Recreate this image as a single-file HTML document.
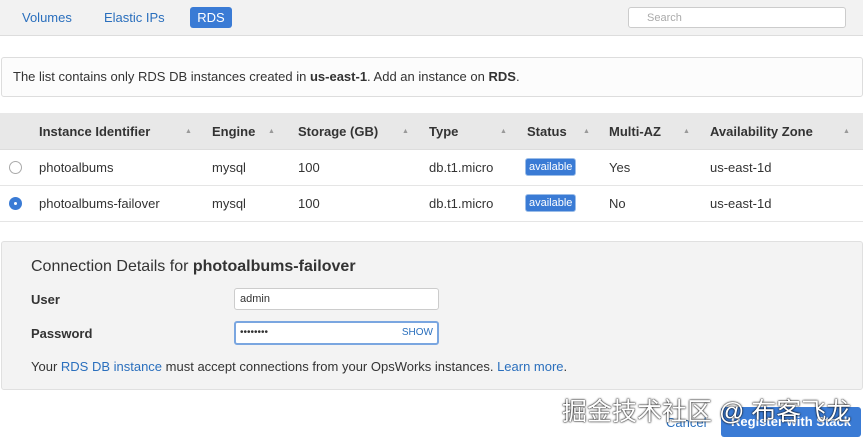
<!DOCTYPE html>
<html><head><style>
body{margin:0;width:863px;height:437px;background:#fff;font-family:"Liberation Sans","Noto Sans CJK SC",sans-serif;color:#333;position:relative;overflow:hidden;font-size:13px}
.a{position:absolute;white-space:nowrap}
.blue{color:#2a6fbd}
.hd{font-weight:bold;font-size:13px;color:#333}
.arr{font-size:7px;color:#999}
.badge{background:#3a7bd5;color:#fff;border-radius:3px;padding:2px 3px;font-size:11px;border:1px solid #9bbde8}
</style></head><body>
<div class="a" style="left:0;top:0;width:863px;height:35px;background:#f2f2f2;border-bottom:1px solid #ddd"></div>
<div class="a blue" style="left:22px;top:10px">Volumes</div>
<div class="a blue" style="left:104px;top:10px">Elastic IPs</div>
<div class="a" style="left:190px;top:7px;width:42px;height:21px;background:#3a7bd5;border-radius:3px;color:#fff;text-align:center;line-height:21px">RDS</div>
<div class="a" style="left:628px;top:7px;width:218px;height:21px;background:#fff;border:1px solid #ccc;border-radius:3px;color:#aaa;font-size:11px;line-height:21px;padding-left:18px;box-sizing:border-box">Search</div>

<div class="a" style="left:1px;top:57px;width:860px;height:38px;border:1px solid #ddd;border-radius:3px;background:#fcfcfc"></div>
<div class="a" style="left:13px;top:69px">The list contains only RDS DB instances created in <b>us-east-1</b>. Add an instance on <b>RDS</b>.</div>

<div class="a" style="left:0;top:113px;width:863px;height:36px;background:#e8e8e8;border-bottom:1px solid #ddd"></div>
<div class="a hd" style="left:39px;top:124px">Instance Identifier</div><div class="a arr" style="left:185px;top:128px">▲</div>
<div class="a hd" style="left:212px;top:124px">Engine</div><div class="a arr" style="left:268px;top:128px">▲</div>
<div class="a hd" style="left:298px;top:124px">Storage (GB)</div><div class="a arr" style="left:402px;top:128px">▲</div>
<div class="a hd" style="left:429px;top:124px">Type</div><div class="a arr" style="left:500px;top:128px">▲</div>
<div class="a hd" style="left:527px;top:124px">Status</div><div class="a arr" style="left:583px;top:128px">▲</div>
<div class="a hd" style="left:609px;top:124px">Multi-AZ</div><div class="a arr" style="left:683px;top:128px">▲</div>
<div class="a hd" style="left:710px;top:124px">Availability Zone</div><div class="a arr" style="left:843px;top:128px">▲</div>

<div class="a" style="left:0;top:185px;width:863px;border-top:1px solid #e5e5e5"></div>
<div class="a" style="left:0;top:221px;width:863px;border-top:1px solid #e5e5e5"></div>
<div class="a" style="left:9px;top:161px;width:11px;height:11px;border:1px solid #aaa;border-radius:50%"></div>
<div class="a" style="left:9px;top:197px;width:13px;height:13px;background:#3a7bd5;border-radius:50%"></div>
<div class="a" style="left:14px;top:202px;width:3px;height:3px;background:#fff;border-radius:50%"></div>
<div class="a" style="left:39px;top:160px">photoalbums</div>
<div class="a" style="left:212px;top:160px">mysql</div>
<div class="a" style="left:298px;top:160px">100</div>
<div class="a" style="left:429px;top:160px">db.t1.micro</div>
<div class="a badge" style="left:525px;top:158px">available</div>
<div class="a" style="left:609px;top:160px">Yes</div>
<div class="a" style="left:710px;top:160px">us-east-1d</div>
<div class="a" style="left:39px;top:196px">photoalbums-failover</div>
<div class="a" style="left:212px;top:196px">mysql</div>
<div class="a" style="left:298px;top:196px">100</div>
<div class="a" style="left:429px;top:196px">db.t1.micro</div>
<div class="a badge" style="left:525px;top:194px">available</div>
<div class="a" style="left:609px;top:196px">No</div>
<div class="a" style="left:710px;top:196px">us-east-1d</div>

<div class="a" style="left:1px;top:241px;width:860px;height:147px;background:#f3f3f3;border:1px solid #e0e0e0;border-radius:3px"></div>
<div class="a" style="left:31px;top:258px;font-size:16px">Connection Details for <b>photoalbums-failover</b></div>
<div class="a" style="left:31px;top:292px;font-weight:bold">User</div>
<div class="a" style="left:234px;top:288px;width:205px;height:22px;background:#fff;border:1px solid #ccc;border-radius:3px;box-sizing:border-box;font-size:11px;padding:4px 5px">admin</div>
<div class="a" style="left:31px;top:326px;font-weight:bold">Password</div>
<div class="a" style="left:234px;top:321px;width:205px;height:24px;background:#fff;border:2px solid #7aa6e0;border-radius:3px;box-sizing:border-box;font-size:10px;padding:4px 4px">••••••••<span style="float:right;color:#2a6fbd">SHOW</span></div>
<div class="a" style="left:31px;top:359px">Your <span class="blue">RDS DB instance</span> must accept connections from your OpsWorks instances. <span class="blue">Learn more</span>.</div>

<div class="a blue" style="left:666px;top:415px">Cancel</div>
<div class="a" style="left:721px;top:407px;width:140px;height:30px;background:#3a7bd5;border-radius:3px;color:#fff;font-weight:bold;text-align:center;line-height:30px">Register with Stack</div>
<div class="a" style="left:562px;top:392px;font-size:25px;color:#fff;text-shadow:0 0 2px #000,0 0 1px #000">掘金技术社区 @ 布客飞龙</div>
</body></html>
